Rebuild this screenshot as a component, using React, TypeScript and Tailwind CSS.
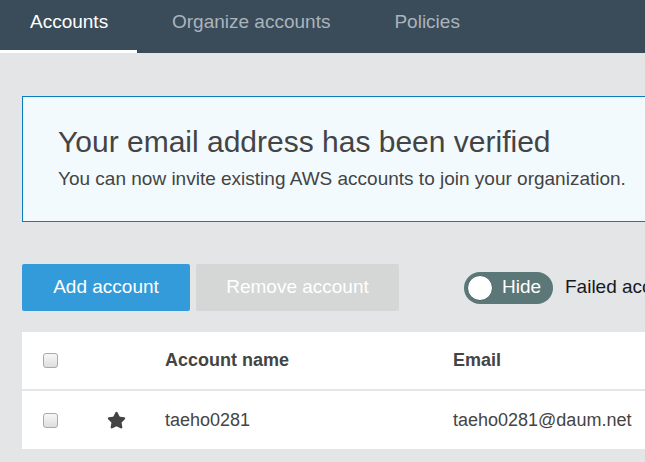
import { Star } from "lucide-react";

const Checkbox = () => (
  <span className="block h-[15px] w-[15px] rounded-[3px] border border-[#a9a9a9] bg-gradient-to-b from-[#f7f7f7] to-[#dedede]" />
);

export default function App() {
  return (
    <div className="h-[462px] w-[645px] overflow-hidden bg-[#e4e5e7] font-['Liberation_Sans',Arial,sans-serif]">
      <nav className="flex h-[53px] bg-[#3a4b59] text-[19px]">
        <div className="flex w-[137px] flex-col">
          <span className="flex-1 pl-[30px] pt-[8px] text-white">Accounts</span>
          <span className="h-[3px] bg-white" />
        </div>
        <span className="ml-[35px] pt-[8px] text-[#aab4bc]">Organize accounts</span>
        <span className="ml-[64px] pt-[8px] text-[#aab4bc]">Policies</span>
      </nav>

      <main className="w-[780px] pl-[22px] pt-[43px]">
        <section className="h-[126px] border border-[#0b7dbf] bg-[#f2fafe] pl-[35px] pt-[27px] text-[#444]">
          <h1 className="text-[30px] leading-[36px]">Your email address has been verified</h1>
          <p className="mt-[7px] text-[19px] leading-[24px]">
            You can now invite existing AWS accounts to join your organization.
          </p>
        </section>

        <div className="mt-[42px] flex items-center">
          <button className="h-[47px] w-[168px] rounded-[2px] bg-[#339bd9] text-[19px] text-white">
            Add account
          </button>
          <button className="ml-[6px] h-[47px] w-[203px] rounded-[2px] bg-[#d5d6d6] text-[19px] text-white">
            Remove account
          </button>
          <div className="ml-[65px] flex h-[32px] w-[89px] items-center rounded-full bg-[#5b7778] pl-[3px]">
            <span className="h-[26px] w-[26px] rounded-full border border-[#4a6263] bg-white" />
            <span className="ml-[9px] text-[19px] text-white">Hide</span>
          </div>
          <span className="ml-[12px] text-[19px] text-[#16191f]">Failed accounts</span>
        </div>

        <div className="mt-[21px] bg-white text-[18px] text-[#444]">
          <div className="flex h-[59px] items-center border-b-2 border-[#e4e5e7]">
            <span className="ml-[21px] w-[122px]">
              <Checkbox />
            </span>
            <span className="w-[288px] font-bold">Account name</span>
            <span className="font-bold">Email</span>
          </div>
          <div className="flex h-[58px] items-center">
            <span className="ml-[21px] w-[64px]">
              <Checkbox />
            </span>
            <span className="w-[58px]">
              <Star size={19} className="fill-[#444] text-[#444]" />
            </span>
            <span className="w-[288px]">taeho0281</span>
            <span>taeho0281@daum.net</span>
          </div>
        </div>
      </main>
    </div>
  );
}
